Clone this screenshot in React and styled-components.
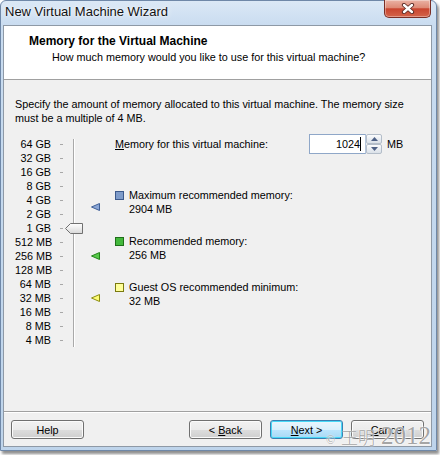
import React from 'react';
import styled, { createGlobalStyle } from 'styled-components';

const Global = createGlobalStyle`
  html, body { margin: 0; padding: 0; background: #ffffff; }
  body {
    font-family: "Liberation Sans", Arial, sans-serif;
    font-size: 10.8px;
    line-height: 14px;
    color: #000;
  }
  #root { width: 440px; height: 455px; }
`;

const Window = styled.div`
  position: relative;
  width: 437px;
  height: 451px;
  box-sizing: border-box;
  border: 1px solid #6f88a8;
  border-radius: 6px 6px 0 0;
  background: linear-gradient(180deg, #dbe8f6 0, #c9dcf0 25px, #bed4eb 100%);
  box-shadow: 2px 3px 3px rgba(0, 0, 0, 0.45);
  display: flex;
  flex-direction: column;
  padding: 0 4px 3px 2px;
`;

const TitleBar = styled.div`
  height: 24px;
  display: flex;
  justify-content: space-between;
  align-items: flex-start;
  padding-left: 2px;
`;

const TitleText = styled.div`
  font-size: 13px;
  line-height: 16px;
  padding-top: 3px;
  color: #111;
  text-shadow: 0 0 6px rgba(255, 255, 255, 0.95), 0 0 2px rgba(255, 255, 255, 0.9);
`;

const CloseButton = styled.div`
  width: 47px;
  height: 18px;
  margin-top: -1px;
  margin-right: 1px;
  box-sizing: border-box;
  border: 1px solid #7a2e25;
  border-top: none;
  border-radius: 0 0 5px 5px;
  background: linear-gradient(180deg, #eab3a5 0%, #de8a76 45%, #c9452f 52%, #d4644a 100%);
  box-shadow: inset 0 0 0 1px rgba(255, 255, 255, 0.35);
  display: flex;
  align-items: center;
  justify-content: center;
`;

const Client = styled.div`
  flex: 1;
  display: flex;
  flex-direction: column;
  border: 1px solid #8e99a6;
  background: #f0f0f0;
  min-height: 0;
`;

const Header = styled.div`
  height: 45px;
  background: #ffffff;
  border-bottom: 1px solid #a0a0a0;
  padding: 8px 0 0 25px;
`;

const HeaderTitle = styled.div`
  font-size: 12px;
  font-weight: bold;
  line-height: 14px;
`;

const HeaderSub = styled.div`
  margin-top: 2px;
  margin-left: 23px;
`;

const Body = styled.div`
  flex: 1;
  padding: 17px 2px 0 11px;
`;

const Description = styled.p`
  margin: 0;
`;

const SliderArea = styled.div`
  display: flex;
  align-items: stretch;
  margin-top: 9px;
`;

const Scale = styled.div`
  display: flex;
  flex-direction: column;
  padding-top: 3px;
`;

const ScaleRow = styled.div`
  height: 14px;
  display: flex;
  align-items: center;
`;

const ScaleLabel = styled.span`
  width: 36px;
  text-align: right;
  white-space: nowrap;
`;

const Tick = styled.span`
  width: 3px;
  height: 1px;
  margin-left: 9px;
  background: #a8a8a8;
`;

const Track = styled.div`
  position: relative;
  width: 22px;
  &::before {
    content: '';
    position: absolute;
    left: 10px;
    top: 5px;
    bottom: 0;
    width: 1px;
    background: #a9a9a9;
    border-right: 1px solid #ffffff;
  }
`;

const Thumb = styled.svg`
  position: absolute;
  left: 2px;
  width: 18px;
  height: 11px;
`;

const Markers = styled.div`
  position: relative;
  width: 9px;
  margin-left: 6px;
`;

const Marker = styled.svg`
  position: absolute;
  left: 0;
  width: 9px;
  height: 8px;
`;

const RightPanel = styled.div`
  margin-left: 15px;
  display: flex;
  flex-direction: column;
`;

const MemRow = styled.div`
  height: 20px;
  display: flex;
  align-items: center;
`;

const MemLabel = styled.span`
  width: 194px;
`;

const Field = styled.div`
  width: 57px;
  height: 20px;
  box-sizing: border-box;
  border: 1px solid #8fa7c8;
  border-right-color: #b6c6dc;
  background: #fff;
  display: flex;
  align-items: center;
  justify-content: flex-end;
  padding-right: 4px;
`;

const Caret = styled.span`
  display: inline-block;
  width: 1px;
  height: 14px;
  background: #000;
`;

const Spinner = styled.div`
  width: 16px;
  height: 20px;
  display: flex;
  flex-direction: column;
`;

const SpinButton = styled.div`
  height: 10px;
  box-sizing: border-box;
  border: 1px solid #b3bdc9;
  border-radius: 2px;
  background: linear-gradient(180deg, #fbfcfd 0%, #e9edf2 50%, #dbe1e8 100%);
  display: flex;
  align-items: center;
  justify-content: center;
`;

const Unit = styled.span`
  margin-left: 5px;
`;

const Legend = styled.div`
  margin-top: 34px;
  display: flex;
  flex-direction: column;
  gap: 18px;
`;

const LegendItem = styled.div`
  display: grid;
  grid-template-columns: 14px auto;
`;

const Swatch = styled.span`
  width: 9px;
  height: 9px;
  box-sizing: border-box;
  margin-top: 3px;
  border: 1px solid ${(p) => p.$border};
  background: ${(p) => p.$fill};
`;

const Footer = styled.div`
  display: flex;
  gap: 8px;
  padding: 8px 7px 7px;
  border-top: 1px solid #a0a0a0;
  box-shadow: inset 0 1px 0 #ffffff;
`;

const Button = styled.div`
  width: 73px;
  height: 19px;
  box-sizing: border-box;
  border: 1px solid ${(p) => (p.$primary ? '#3c7fb1' : '#707070')};
  border-radius: 3px;
  background: ${(p) =>
    p.$primary
      ? 'linear-gradient(180deg, #eaf6fd 0%, #d9f0fc 50%, #bee6fd 51%, #a7d9f5 100%)'
      : 'linear-gradient(180deg, #f2f2f2 0%, #ebebeb 50%, #dddddd 51%, #cfcfcf 100%)'};
  box-shadow: inset 0 0 0 1px ${(p) => (p.$primary ? '#48d9f7' : '#fbfbfb')};
  display: flex;
  align-items: center;
  justify-content: center;
  margin-left: ${(p) => (p.$push ? 'auto' : '0')};
`;

const Watermark = styled.div`
  position: absolute;
  right: 5px;
  bottom: 3px;
  display: flex;
  align-items: baseline;
  gap: 6px;
  color: rgba(140, 140, 140, 0.8);
  font-family: "Liberation Serif", "Noto Sans CJK SC", serif;
  text-shadow: 0 0 2px #fff, 0 0 1px #fff;
  pointer-events: none;
`;

const WmSmall = styled.span`
  font-size: 12px;
`;

const WmCjk = styled.span`
  font-family: "Noto Sans CJK SC", sans-serif;
  font-size: 17px;
  font-weight: 300;
`;

const WmYear = styled.span`
  font-size: 25px;
`;

const STEPS = ['64 GB', '32 GB', '16 GB', '8 GB', '4 GB', '2 GB', '1 GB', '512 MB', '256 MB', '128 MB', '64 MB', '32 MB', '16 MB', '8 MB', '4 MB'];
const centerOf = (mb) => 10 + (16 - Math.log2(mb)) * 14;

const MARKERS = [
  { mb: 2904, fill: '#8aa6d6', stroke: '#3f5f96' },
  { mb: 256, fill: '#57c94a', stroke: '#23831a' },
  { mb: 32, fill: '#fdfd74', stroke: '#8c8c10' },
];

const LEGEND = [
  { label: 'Maximum recommended memory:', value: '2904 MB', fill: '#7f9cca', border: '#3d5a8c' },
  { label: 'Recommended memory:', value: '256 MB', fill: '#43b83c', border: '#1f6f1a' },
  { label: 'Guest OS recommended minimum:', value: '32 MB', fill: '#ffff9a', border: '#7a7a10' },
];

const Arrow = ({ up }) => (
  <svg width="7" height="4" viewBox="0 0 7 4">
    <polygon points={up ? '0,4 7,4 3.5,0' : '0,0 7,0 3.5,4'} fill="#4e6186" />
  </svg>
);

export default function App() {
  const memory = 1024;
  return (
    <>
      <Global />
      <Window>
        <TitleBar>
          <TitleText>New Virtual Machine Wizard</TitleText>
          <CloseButton>
            <svg width="14" height="11" viewBox="0 0 14 11">
              <path d="M3 2 L11 9 M11 2 L3 9" stroke="#5a2a24" strokeWidth="4.2" strokeLinecap="round" />
              <path d="M3 2 L11 9 M11 2 L3 9" stroke="#ffffff" strokeWidth="2.4" strokeLinecap="round" />
            </svg>
          </CloseButton>
        </TitleBar>
        <Client>
          <Header>
            <HeaderTitle>Memory for the Virtual Machine</HeaderTitle>
            <HeaderSub>How much memory would you like to use for this virtual machine?</HeaderSub>
          </Header>
          <Body>
            <Description>
              Specify the amount of memory allocated to this virtual machine. The memory size
              <br />
              must be a multiple of 4 MB.
            </Description>
            <SliderArea>
              <Scale>
                {STEPS.map((s) => (
                  <ScaleRow key={s}>
                    <ScaleLabel>{s}</ScaleLabel>
                    <Tick />
                  </ScaleRow>
                ))}
              </Scale>
              <Track>
                <Thumb viewBox="0 0 18 11" style={{ top: centerOf(memory) - 5.5 }}>
                  <defs>
                    <linearGradient id="thumbg" x1="0" y1="0" x2="0" y2="1">
                      <stop offset="0" stopColor="#ffffff" />
                      <stop offset="1" stopColor="#d8d8d8" />
                    </linearGradient>
                  </defs>
                  <path d="M0.5 5.5 L5.5 0.5 H17.5 V10.5 H5.5 Z" fill="url(#thumbg)" stroke="#707070" strokeLinejoin="round" />
                </Thumb>
              </Track>
              <Markers>
                {MARKERS.map((m) => (
                  <Marker key={m.mb} viewBox="0 0 9 8" style={{ top: centerOf(m.mb) - 4 }}>
                    <polygon points="0.5,4 8.5,0.5 8.5,7.5" fill={m.fill} stroke={m.stroke} strokeLinejoin="round" />
                  </Marker>
                ))}
              </Markers>
              <RightPanel>
                <MemRow>
                  <MemLabel>
                    <u>M</u>emory for this virtual machine:
                  </MemLabel>
                  <Field>
                    {memory}
                    <Caret />
                  </Field>
                  <Spinner>
                    <SpinButton>
                      <Arrow up />
                    </SpinButton>
                    <SpinButton>
                      <Arrow />
                    </SpinButton>
                  </Spinner>
                  <Unit>MB</Unit>
                </MemRow>
                <Legend>
                  {LEGEND.map((l) => (
                    <LegendItem key={l.label}>
                      <Swatch $fill={l.fill} $border={l.border} />
                      <span>{l.label}</span>
                      <span />
                      <span>{l.value}</span>
                    </LegendItem>
                  ))}
                </Legend>
              </RightPanel>
            </SliderArea>
          </Body>
          <Footer>
            <Button>Help</Button>
            <Button $push>
              &lt;&nbsp;<u>B</u>ack
            </Button>
            <Button $primary>
              <u>N</u>ext &gt;
            </Button>
            <Button>
              <u>C</u>ancel
            </Button>
          </Footer>
        </Client>
        <Watermark>
          <WmSmall>©</WmSmall>
          <WmCjk>王明</WmCjk>
          <WmYear>2012</WmYear>
        </Watermark>
      </Window>
    </>
  );
}
